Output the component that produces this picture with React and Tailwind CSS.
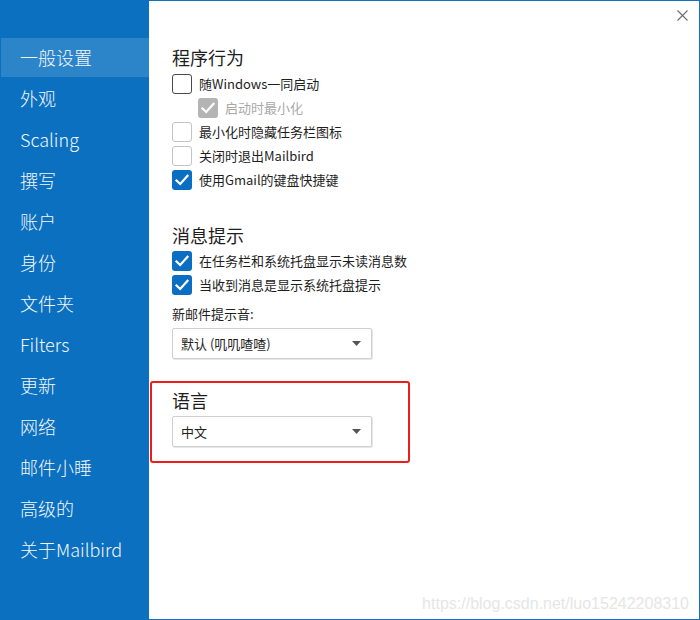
import React from "react";

const font = { fontFamily: '"Noto Sans CJK SC", "Noto Sans", sans-serif' };

function Check({ variant }) {
  if (variant === "checked" || variant === "disabled") {
    const bg = variant === "checked" ? "bg-[#0a6fc2]" : "bg-[#b4b4b4]";
    return (
      <div className={`w-[20px] h-[20px] rounded-[3px] ${bg} flex items-center justify-center shrink-0`}>
        <svg width="16" height="16" viewBox="0 0 16 16">
          <path d="M2.5 8.5 L6.2 12 L13.5 3.8" fill="none" stroke="white" strokeWidth="2.2" strokeLinecap="square" />
        </svg>
      </div>
    );
  }
  const border = variant === "empty-dark" ? "border-[#4a4a4a]" : "border-[#c4c4c4]";
  return <div className={`w-[20px] h-[20px] rounded-[3px] border ${border} bg-white shrink-0`} />;
}

function Row({ variant, children, indent, muted }) {
  return (
    <div className={`h-[24px] flex items-center gap-[7px] ${indent ? "pl-[26px]" : ""}`}>
      <Check variant={variant} />
      <span className={`text-[13px] leading-none pb-[2px] ${muted ? "text-[#a9a9a9]" : "text-[#1e1e1e]"}`}>{children}</span>
    </div>
  );
}

function Select({ label }) {
  return (
    <div className="w-[200px] h-[31px] border border-[#cfcfcf] rounded-[2px] shadow-[1px_1px_0_#e6e6e6] bg-white flex items-center justify-between pl-[8px] pr-[10px]">
      <span className="text-[13px] leading-none pb-[1px] text-[#1e1e1e]">{label}</span>
      <svg width="9" height="5" viewBox="0 0 9 5">
        <path d="M0 0 H9 L4.5 5 Z" fill="#555" />
      </svg>
    </div>
  );
}

const nav = ["一般设置", "外观", "Scaling", "撰写", "账户", "身份", "文件夹", "Filters", "更新", "网络", "邮件小睡", "高级的", "关于Mailbird"];

export default function App() {
  return (
    <div className="w-[700px] h-[620px] flex bg-white overflow-hidden" style={font}>
      <div className="w-[149px] shrink-0 bg-[#0b70bf] pt-[38px] flex flex-col gap-[2px]">
        {nav.map((n, i) => (
          <div
            key={n}
            className={`h-[39px] flex items-center pb-[2px] text-[18px] font-light leading-none text-[#f4f8fc] ${i === 0 ? "bg-[#2c84c9] ml-px pl-[19px]" : "pl-[20px]"}`}
          >
            {n}
          </div>
        ))}
      </div>
      <div className="flex-1 relative border-t border-r border-b border-[#1570bd] pl-[23px] pt-[45px]">
        <button className="absolute right-[11px] top-[9px] w-[11px] h-[11px]">
          <svg width="11" height="11" viewBox="0 0 11 11">
            <path d="M0.5 0.5 L10.5 10.5 M10.5 0.5 L0.5 10.5" stroke="#6b6b6b" strokeWidth="1.1" />
          </svg>
        </button>

        <div className="h-[24px] flex items-center pb-[3px] text-[18px] leading-none text-[#1e1e1e]">程序行为</div>
        <div className="mt-[2px] flex flex-col">
          <Row variant="empty-dark">随Windows一同启动</Row>
          <Row variant="disabled" indent muted>启动时最小化</Row>
          <Row variant="empty">最小化时隐藏任务栏图标</Row>
          <Row variant="empty">关闭时退出Mailbird</Row>
          <Row variant="checked">使用Gmail的键盘快捷键</Row>
        </div>

        <div className="mt-[32px] h-[24px] flex items-center pb-[3px] text-[18px] leading-none text-[#1e1e1e]">消息提示</div>
        <div className="mt-[1px] flex flex-col">
          <Row variant="checked">在任务栏和系统托盘显示未读消息数</Row>
          <Row variant="checked">当收到消息是显示系统托盘提示</Row>
        </div>
        <div className="mt-[9px] h-[16px] flex items-center pb-[2px] text-[13px] leading-none text-[#1e1e1e]">新邮件提示音:</div>
        <div className="mt-[6px]">
          <Select label="默认 (叽叽喳喳)" />
        </div>

        <div className="mt-[22px] -ml-[22px] w-[260px] border-2 border-[#ee1c1c] rounded-[3px] pl-[20px] pt-[6px] pb-[14px]">
          <div className="h-[24px] flex items-center pb-[3px] text-[18px] leading-none text-[#1e1e1e]">语言</div>
          <div className="mt-[3px]">
            <Select label="中文" />
          </div>
        </div>

        <div
          className="absolute right-[10px] bottom-[7px] text-[16px] leading-none text-[#e6e6e6]"
          style={{ fontFamily: '"Liberation Sans", Arial, sans-serif' }}
        >
          https://blog.csdn.net/luo15242208310
        </div>
      </div>
    </div>
  );
}
